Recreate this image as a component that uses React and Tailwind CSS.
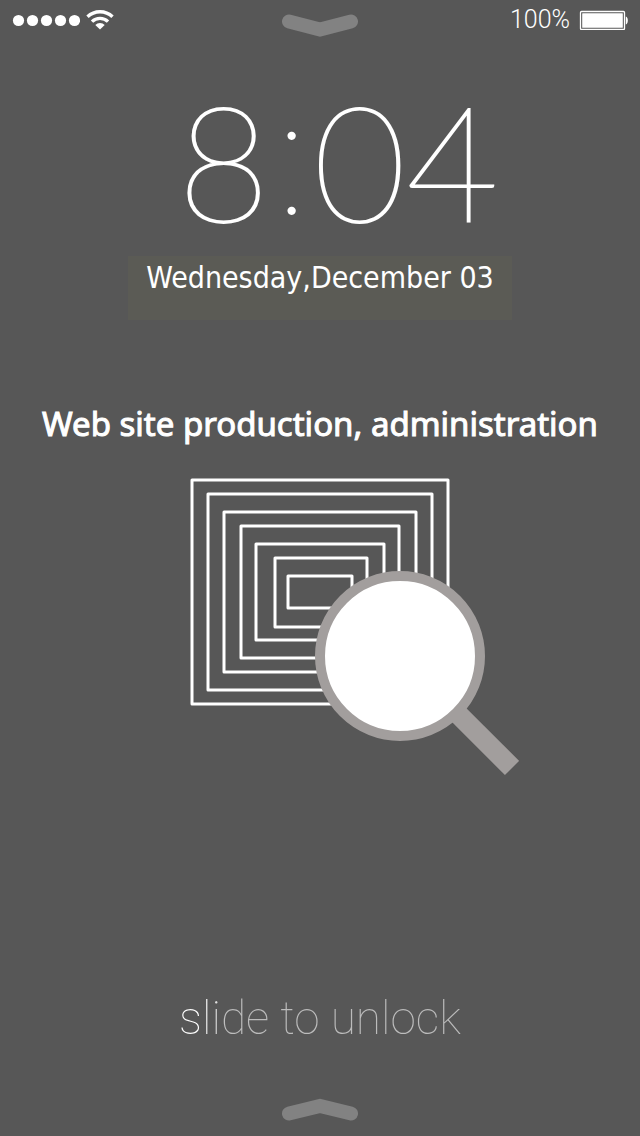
import { useState } from 'react'

const frames = [
    { x: 2, y: 2, w: 256, h: 224 },
    { x: 18, y: 16, w: 224, h: 196 },
    { x: 34, y: 34, w: 192, h: 160 },
    { x: 51, y: 48, w: 158, h: 132 },
    { x: 66, y: 66, w: 128, h: 96 },
    { x: 85, y: 80, w: 92, h: 69 },
    { x: 98, y: 98, w: 64, h: 32 },
]

function Grabber({ label, up }) {
    return (
        <button type="button" aria-label={label} className="block cursor-pointer">
            <svg viewBox="0 0 76 24" className="w-[76px] h-6" fill="none" stroke="#828282" strokeWidth="14" strokeLinecap="round">
                <path d={up ? "M7 15.5L38 8L69 15.5" : "M7 7.500L38 15.500L69 7.500"} />
            </svg>
        </button>
    )
}

function StatusBar() {
    return (
        <header className="grid grid-cols-3 items-start px-3 h-10">
            <div className="flex items-center gap-[6px] pt-[10px]">
                <svg viewBox="0 0 68 20" className="w-[68px] h-5" fill="#fff">
                    {[6.5, 20.5, 34.5, 48.5, 62.5].map((cx) => <circle key={cx} cx={cx} cy="10.5" r="5.6" />)}
                </svg>
                <svg viewBox="0 0 28 20" className="w-7 h-5" fill="none" stroke="#fff" strokeWidth="3.4">
                    <path d="M1.5 6.8A18 18 0 0 1 26.5 6.8" />
                    <path d="M6 11.6A11.5 11.5 0 0 1 22 11.6" />
                    <path d="M14 19.5L9.3 14.9A6.6 6.6 0 0 1 18.7 14.9Z" fill="#fff" stroke="none" />
                </svg>
            </div>
            <div className="flex justify-center pt-[14px]">
                <Grabber label="Notifications" />
            </div>
            <div className="flex items-center justify-end gap-2 pt-[10px] font-['Roboto',sans-serif] font-light text-[25px] leading-5">
                <span>100%</span>
                <svg viewBox="0 0 50 20" className="w-[50px] h-5">
                    <rect x="2.5" y="1.5" width="44" height="18" rx="1" fill="none" stroke="#fff" strokeWidth="1.3" />
                    <rect x="4.2" y="3.2" width="40.6" height="14.6" rx="0.5" fill="#fff" />
                    <path d="M47.8 6.5C50.5 7 50.5 14 47.8 14.5Z" fill="#fff" />
                </svg>
            </div>
        </header>
    )
}

function SearchArt() {
    return (
        <svg viewBox="0 0 329 298" className="w-[329px] h-[298px] ml-[190px]" aria-hidden="true">
            <g fill="none" stroke="#fff" strokeWidth="3" strokeLinejoin="round">
                {frames.map((f) => <rect key={f.x} x={f.x} y={f.y} width={f.w} height={f.h} />)}
            </g>
            <path d="M260 228L322 290" stroke="#a29e9d" strokeWidth="20" />
            <circle cx="210" cy="178" r="80" fill="#fff" stroke="#a29e9d" strokeWidth="10" />
        </svg>
    )
}

function App() {
    const [time] = useState({ hours: '8', minutes: '04' })

    return (
        <div className="min-h-screen flex flex-col bg-[#575757] text-white">
            <StatusBar />
            <main className="grow flex flex-col">
                <h1 className="flex items-start justify-center h-[216px] pt-10 pl-9 font-['Lato',sans-serif] font-thin text-[160px] leading-[160px]">
                    <span className="[-webkit-text-stroke:2px_white]">{time.hours}</span>
                    <span className="-mt-1 font-['Inter',sans-serif]">:</span>
                    <span className="[-webkit-text-stroke:2px_white]">{time.minutes}</span>
                </h1>
                <p className="w-3/5 h-16 mx-auto pt-1 bg-[#5b5b55] text-center font-['DejaVu_Sans_Condensed','DejaVu_Sans',sans-serif] font-stretch-condensed text-[30px] leading-9">
                    Wednesday,December 03
                </p>
                <h2 className="mt-20 text-center font-['Noto_Sans',sans-serif] text-[33px] leading-12 [-webkit-text-stroke:1px_white]">
                    Web site production, administration
                </h2>
                <div className="mt-[30px]">
                    <SearchArt />
                </div>
            </main>
            <footer className="flex flex-col items-center gap-12 pb-[14px]">
                <button
                    type="button"
                    className="cursor-pointer font-['Roboto',sans-serif] font-thin text-[46px] leading-[64px] text-transparent bg-clip-text bg-[linear-gradient(100deg,#fff_10%,#bcbcbc_18%)]">
                    slide to unlock
                </button>
                <Grabber label="Control center" up />
            </footer>
        </div>
    )
}

export default App
